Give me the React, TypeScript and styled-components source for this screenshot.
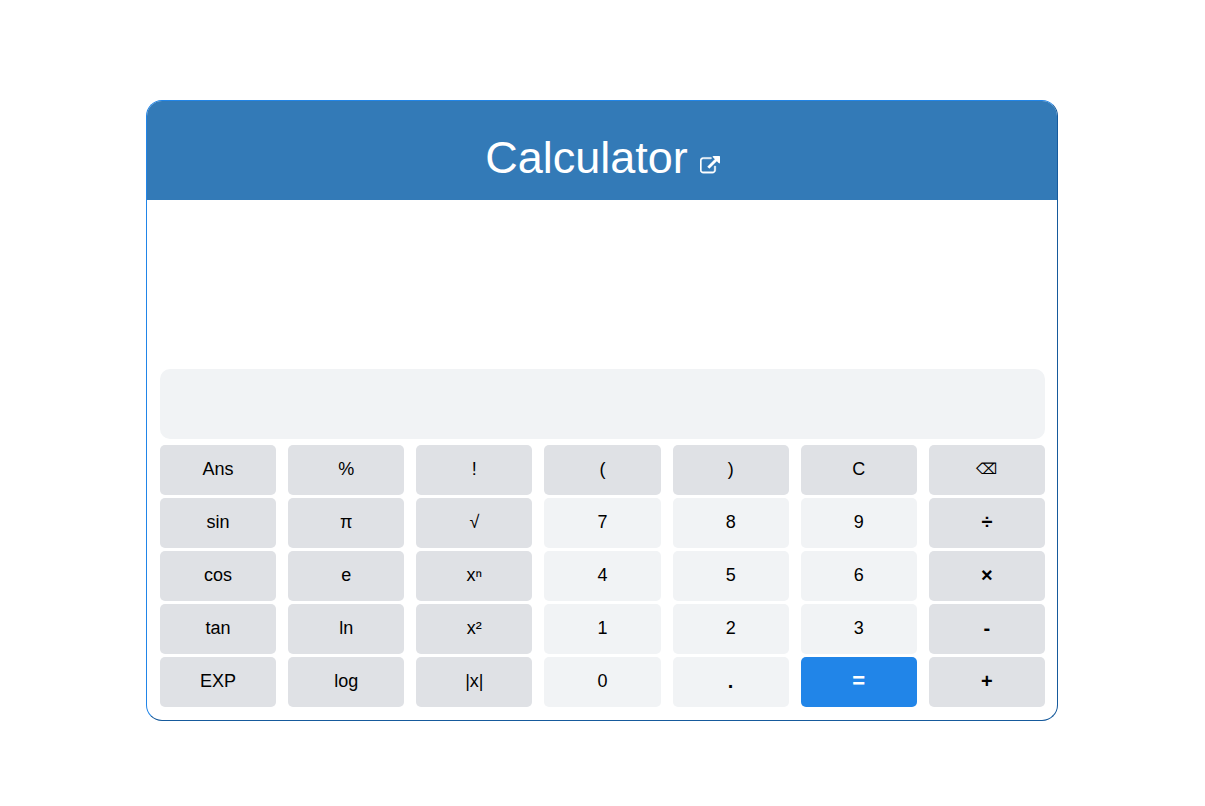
import React, { useState } from "react";
import styled, { createGlobalStyle } from "styled-components";

const GlobalStyle = createGlobalStyle`
  *, *::before, *::after { box-sizing: border-box; }
  body {
    margin: 0;
    background: #fff;
    color: #000;
    font-family: "Liberation Sans", Arial, Helvetica, sans-serif;
  }
`;

const Page = styled.main`
  padding: 100px 147px 40px 146px;
`;

const Card = styled.section`
  border: 1px solid;
  border-color: #2185e8 #165a9c #165a9c #2185e8;
  border-radius: 16px;
  overflow: hidden;
`;

const Header = styled.header`
  display: flex;
  justify-content: center;
  align-items: flex-end;
  gap: 12px;
  padding: 32px 11px 17px 12px;
  background: #337ab7;
  color: #fff;
`;

const Title = styled.h1`
  margin: 0;
  font-size: 45px;
  line-height: 50px;
  font-weight: 400;
`;

const OpenLink = styled.a`
  padding-bottom: 7px;
  color: inherit;

  svg {
    display: block;
    width: 20px;
    height: 20px;
    fill: currentColor;
  }
`;

const Body = styled.div`
  padding: 0 12px 13px 13px;
`;

const History = styled.output`
  display: block;
  min-height: 169px;
  padding: 16px;
  font-size: 18px;
  text-align: right;
`;

const Entry = styled.input`
  display: block;
  width: 100%;
  height: 70px;
  margin-bottom: 6px;
  padding: 0 16px;
  border: 0;
  border-radius: 10px;
  background: #f1f3f5;
  font: inherit;
  font-size: 28px;
  text-align: right;
`;

const Keys = styled.div`
  display: grid;
  grid-template-columns: repeat(7, minmax(0, 1fr));
  gap: 3px 12px;
`;

type Tone = "function" | "digit" | "equals";
type Face = "plain" | "operator" | "equals" | "symbol";

const tones: Record<Tone, string> = {
  function: "#dfe1e5",
  digit: "#f1f3f5",
  equals: "#2185e8",
};

const sizes: Record<Face, string> = {
  plain: "18px",
  operator: "20px",
  equals: "22px",
  symbol: "15px",
};

const Key = styled.button<{ $tone: Tone; $face: Face }>`
  height: 50px;
  padding: 0 0 2px;
  border: 0;
  border-radius: 5px;
  background: ${({ $tone }) => tones[$tone]};
  color: ${({ $tone }) => ($tone === "equals" ? "#fff" : "#000")};
  font-family: inherit;
  font-size: ${({ $face }) => sizes[$face]};
  font-weight: ${({ $face }) => ($face === "operator" || $face === "equals" ? 700 : 400)};
  line-height: 24px;
  cursor: pointer;
`;

const rows = [
  ["Ans", "%", "!", "(", ")", "C", "⌫"],
  ["sin", "π", "√", "7", "8", "9", "÷"],
  ["cos", "e", "xⁿ", "4", "5", "6", "×"],
  ["tan", "ln", "x²", "1", "2", "3", "-"],
  ["EXP", "log", "|x|", "0", ".", "=", "+"],
];

const toneOf = (label: string): Tone =>
  label === "=" ? "equals" : /^[0-9.]$/.test(label) ? "digit" : "function";

const faceOf = (label: string): Face => {
  if (label === "=") return "equals";
  if (label === "⌫") return "symbol";
  return "÷×-+.".includes(label) ? "operator" : "plain";
};

export default function App() {
  const [entry, setEntry] = useState("");

  const press = (label: string) => {
    if (label === "C") setEntry("");
    else if (label === "⌫") setEntry((value) => value.slice(0, -1));
    else if (label !== "=") setEntry((value) => value + label);
  };

  return (
    <Page>
      <GlobalStyle />
      <Card>
        <Header>
          <Title>Calculator</Title>
          <OpenLink href="#" aria-label="Open in a new window">
            <svg viewBox="0 0 1792 1792" aria-hidden="true">
              <path
                stroke="currentColor"
                strokeWidth="40"
                d="M1408 928v320q0 119-84.500 203.500t-203.500 84.500h-832q-119 0-203.500-84.500t-84.500-203.500v-832q0-119 84.500-203.500t203.500-84.500h704q14 0 23 9t9 23v64q0 14-9 23t-23 9h-704q-66 0-113 47t-47 113v832q0 66 47 113t113 47h832q66 0 113-47t47-113v-320q0-14 9-23t23-9h64q14 0 23 9t9 23zm384-864v512q0 26-19 45t-45 19-45-19l-176-176-652 652q-10 10-23 10t-23-10l-114-114q-10-10-10-23t10-23l652-652-176-176q-19-19-19-45t19-45 45-19h512q26 0 45 19t19 45z"
              />
            </svg>
          </OpenLink>
        </Header>
        <Body>
          <History aria-label="History" />
          <Entry
            aria-label="Expression"
            value={entry}
            onChange={(event) => setEntry(event.target.value)}
          />
          <Keys>
            {rows.flat().map((label) => (
              <Key
                key={label}
                type="button"
                $tone={toneOf(label)}
                $face={faceOf(label)}
                onClick={() => press(label)}
              >
                {label}
              </Key>
            ))}
          </Keys>
        </Body>
      </Card>
    </Page>
  );
}
